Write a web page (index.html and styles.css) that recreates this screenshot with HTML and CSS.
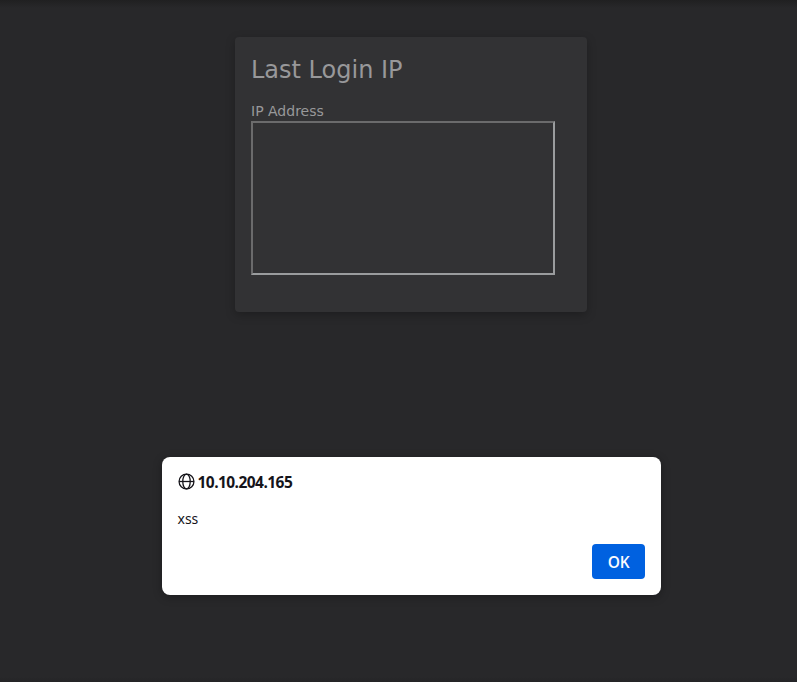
FILE: index.html
```html
<!DOCTYPE html>
<html lang="en">
<head>
<meta charset="utf-8">
<title>Last Login IP</title>
<link rel="stylesheet" href="styles.css">
</head>
<body>
<main class="page">
  <section class="card">
    <h1 class="card-title">Last Login IP</h1>
    <div class="label">IP Address</div>
    <div class="frame"></div>
  </section>
</main>
<div class="dialog" role="alertdialog">
  <div class="dialog-head">
    <svg class="globe" viewBox="0 0 16 16" fill="none" stroke="currentColor" stroke-width="1.2">
      <circle cx="8" cy="8" r="7"/>
      <ellipse cx="8" cy="8" rx="3.5" ry="7"/>
      <path d="M1 8h14"/>
    </svg>
    <span class="host">10.10.204.165</span>
  </div>
  <p class="message">xss</p>
  <button class="ok">OK</button>
</div>
</body>
</html>
```
FILE: styles.css
```css
* { box-sizing: border-box; }
body {
  margin: 0;
  height: 682px;
  overflow: hidden;
  background: linear-gradient(#202021, #28282a 8px, #28282a 677px, #242426);
  font-family: "DejaVu Sans", sans-serif;
}
.page { display: flex; justify-content: center; padding: 37px 0 0 25px; }
.card {
  width: 352px;
  height: 275px;
  padding: 17px 16px 16px;
  border-radius: 4px;
  background: #323234;
  color: #98989a;
  box-shadow: 0 3px 10px rgba(0, 0, 0, .25);
}
.card-title { margin: 0 0 15px; font-size: 24px; line-height: 32px; font-weight: 400; }
.label { font-size: 14px; line-height: 20px; }
.frame {
  width: 304px;
  height: 154px;
  border: 2px solid;
  border-color: #6b6b6c #9a9c9e #9a9c9e #6b6b6c;
}
.dialog {
  position: absolute;
  left: 162px;
  top: 457px;
  width: 499px;
  height: 138px;
  padding: 14px 16px 16px;
  display: flex;
  flex-direction: column;
  border-radius: 8px;
  background: #fff;
  color: #15141a;
  box-shadow: 0 2px 10px rgba(0, 0, 0, .3);
  font-family: "Noto Sans", sans-serif;
}
.dialog-head { display: flex; align-items: center; gap: 2.5px; height: 21px; }
.globe { width: 17px; height: 17px; }
.host {
  margin-top: 1px;
  font: 680 15.5px/21px "Open Sans", "Noto Sans", sans-serif;
  font-stretch: 90%;
  letter-spacing: -.55px;
}
.message { margin: 16px 0 0 -.5px; line-height: 21px; font-size: 14px; }
.ok {
  align-self: flex-end;
  margin: auto 0 0;
  width: 53px;
  height: 35px;
  padding: 0;
  border: 0;
  border-radius: 4px;
  background: #0061e0;
  color: #fbfbfe;
  font: 600 15.5px "Open Sans", "Noto Sans", sans-serif;
  font-stretch: 88%;
  letter-spacing: -.3px;
}
```
